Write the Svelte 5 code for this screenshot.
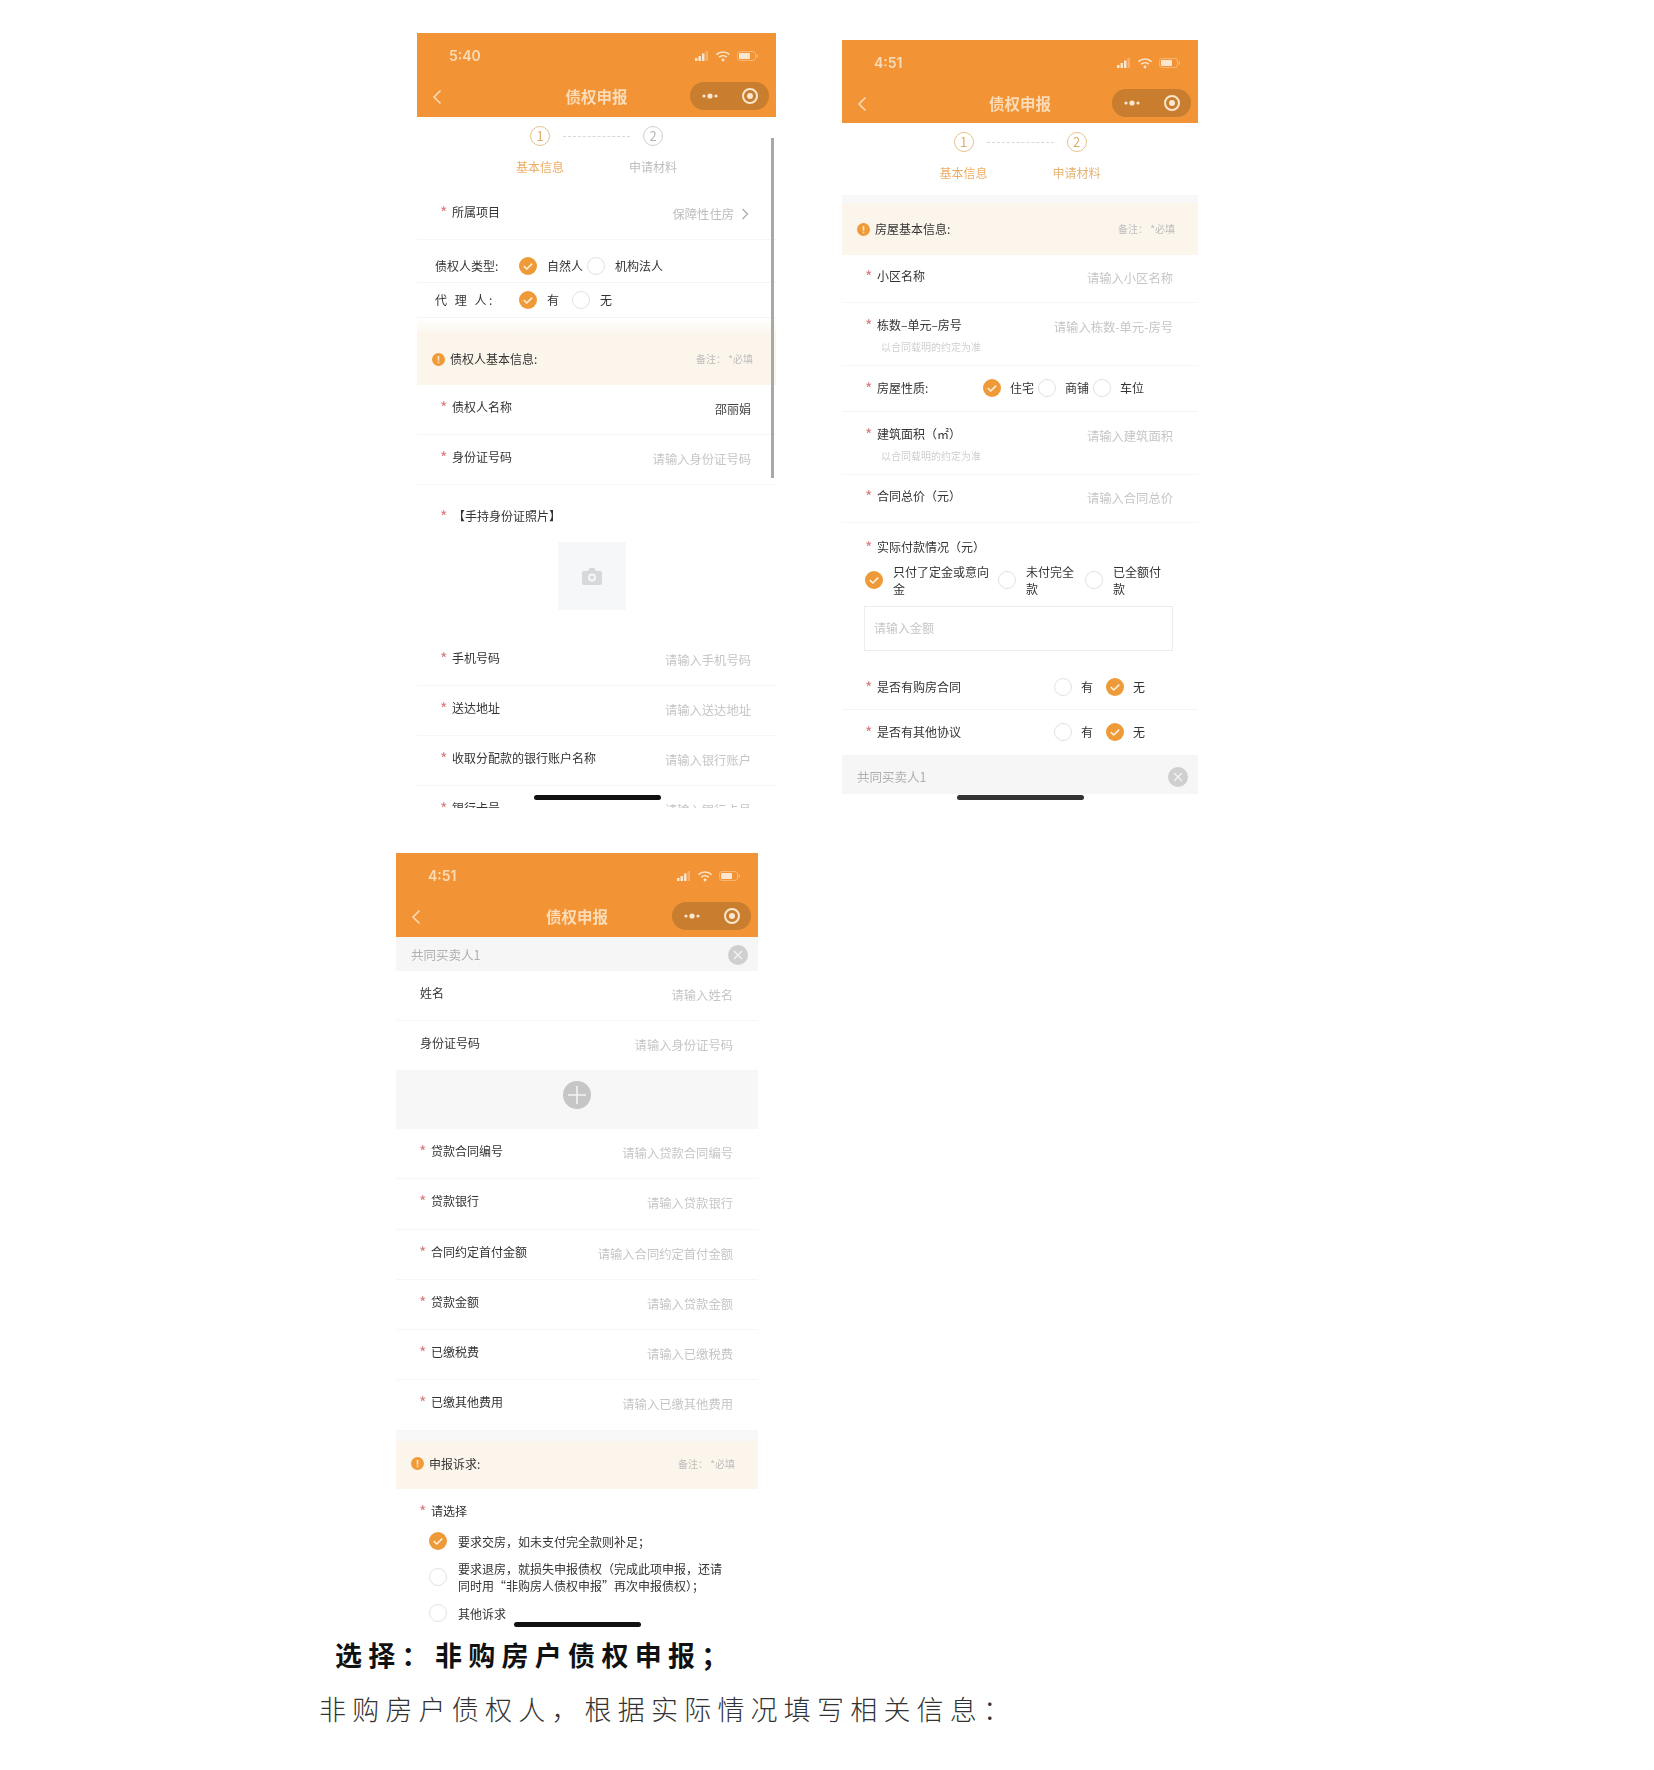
<script>
    const loanRows = [
        ["贷款合同编号", "请输入贷款合同编号"],
        ["贷款银行", "请输入贷款银行"],
        ["合同约定首付金额", "请输入合同约定首付金额"],
        ["贷款金额", "请输入贷款金额"],
        ["已缴税费", "请输入已缴税费"],
        ["已缴其他费用", "请输入已缴其他费用"],
    ];
    const contactRows = [
        ["手机号码", "请输入手机号码"],
        ["送达地址", "请输入送达地址"],
        ["收取分配款的银行账户名称", "请输入银行账户"],
        ["银行卡号", "请输入银行卡号"],
    ];
</script>

{#snippet header(time)}
    <div class="header">
        <div class="status">
            <span class="time">{time}</span>
            <svg width="64" height="12" viewBox="0 0 64 12" fill="#fbe6cf">
                <rect x="0" y="8" width="2.5" height="3" />
                <rect x="3.5" y="6" width="2.5" height="5" />
                <rect x="7" y="3.5" width="2.5" height="7.5" />
                <rect x="10.5" y="1" width="2.5" height="10" opacity="0.35" />
                <path d="M21.5 4.6a9.5 9.5 0 0 1 13 0M24.2 7.2a5.6 5.6 0 0 1 7.6 0" fill="none" stroke="#fbe6cf" stroke-width="1.6" />
                <circle cx="28" cy="10" r="1.4" />
                <rect x="42.5" y="1.5" width="18" height="9" rx="2.5" fill="none" stroke="#fbe6cf" stroke-opacity="0.4" />
                <rect x="44" y="3" width="11" height="6" rx="1" />
                <rect x="61.5" y="4.5" width="1.5" height="3" opacity="0.4" />
            </svg>
        </div>
        <div class="nav">
            <svg class="back" width="10" height="16" viewBox="0 0 10 16">
                <path d="M8.5 1.5 2 8l6.5 6.5" fill="none" stroke="#fbdcb8" stroke-width="1.6" />
            </svg>
            <span class="title">债权申报</span>
            <svg class="capsule" width="79" height="28" viewBox="0 0 79 28">
                <rect width="79" height="28" rx="14" fill="#c97d2e" />
                <circle cx="14" cy="14" r="1.6" fill="#fbe6cf" />
                <circle cx="20" cy="14" r="2.6" fill="#fbe6cf" />
                <circle cx="26" cy="14" r="1.6" fill="#fbe6cf" />
                <circle cx="60" cy="14" r="7" fill="none" stroke="#fbe6cf" stroke-width="2" />
                <circle cx="60" cy="14" r="3" fill="#fbe6cf" />
            </svg>
        </div>
    </div>
{/snippet}

{#snippet steps(activeSecond)}
    <div class="steps">
        <div class="step-marks">
            <span class="mark">1</span>
            <span class="dash"></span>
            <span class="mark" class:muted={!activeSecond}>2</span>
        </div>
        <div class="step-names">
            <span class="on">基本信息</span>
            <span class:on={activeSecond} class:soft={activeSecond}>申请材料</span>
        </div>
    </div>
{/snippet}

{#snippet banner(title)}
    <div class="banner">
        <svg width="13" height="13" viewBox="0 0 13 13">
            <circle cx="6.5" cy="6.5" r="6.5" fill="#f09a38" />
            <rect x="5.7" y="3" width="1.6" height="4.6" fill="#fde7cc" />
            <rect x="5.7" y="8.6" width="1.6" height="1.6" fill="#fde7cc" />
        </svg>
        <span class="banner-title">{title}</span>
        <span class="note">备注： *必填</span>
    </div>
{/snippet}

{#snippet radio(on)}
    {#if on}
        <svg class="radio" width="18" height="18" viewBox="0 0 18 18">
            <circle cx="9" cy="9" r="9" fill="#ee9a38" />
            <path d="M4.8 9.2 7.8 12l5.4-5.4" fill="none" stroke="#fdf0df" stroke-width="1.6" />
        </svg>
    {:else}
        <span class="radio empty"></span>
    {/if}
{/snippet}

{#snippet label(text, star = true)}
    <span class="label">
        {#if star}<i class="star">*</i>{/if}<span>{text}</span>
    </span>
{/snippet}

{#snippet closeBand(cls)}
    <div class="band {cls}">
        <span>共同买卖人1</span>
        <svg width="20" height="20" viewBox="0 0 20 20">
            <circle cx="10" cy="10" r="10" fill="#cfcfcf" />
            <path d="M6 6l8 8M14 6l-8 8" stroke="#f2f2f2" stroke-width="1.5" />
        </svg>
    </div>
{/snippet}

<div class="page">
    <div class="top">
        <section class="phone one">
            {@render header("5:40")}
            {@render steps(false)}

            <div class="row">
                {@render label("所属项目")}
                <span class="hint-value">
                    保障性住房
                    <svg width="8" height="12" viewBox="0 0 8 12">
                        <path d="M1.5 1 6.5 6l-5 5" fill="none" stroke="#aaa" stroke-width="1.2" />
                    </svg>
                </span>
            </div>

            <div class="choice first">
                <span class="choice-name type">债权人类型:</span>
                {@render radio(true)}<span class="opt">自然人</span>
                {@render radio(false)}<span class="opt">机构法人</span>
            </div>
            <div class="choice">
                <span class="choice-name type spaced">代 理 人:</span>
                {@render radio(true)}<span class="opt wide">有</span>
                {@render radio(false)}<span class="opt">无</span>
            </div>

            <div class="spacer fade"></div>
            {@render banner("债权人基本信息:")}

            <div class="row">
                {@render label("债权人名称")}
                <span class="value">邵丽娟</span>
            </div>
            <div class="row">
                {@render label("身份证号码")}
                <span class="holder">请输入身份证号码</span>
            </div>

            <div class="upload">
                <span class="label"><i class="star">*</i><span class="bracket">【手持身份证照片】</span></span>
                <div class="photo">
                    <svg width="20" height="17" viewBox="0 0 20 17">
                        <path d="M2 3h4l1.5-3h5L14 3h4a2 2 0 0 1 2 2v10a2 2 0 0 1-2 2H2a2 2 0 0 1-2-2V5a2 2 0 0 1 2-2z" fill="#d6d8da" />
                        <circle cx="10" cy="9.5" r="4" fill="#f6f7f8" />
                        <circle cx="10" cy="9.5" r="2" fill="#d6d8da" />
                    </svg>
                </div>
            </div>

            {#each contactRows as [name, holder]}
                <div class="row">
                    {@render label(name)}
                    <span class="holder">{holder}</span>
                </div>
            {/each}

            <span class="scroll"></span>
            <span class="home"></span>
        </section>

        <section class="phone two">
            {@render header("4:51")}
            {@render steps(true)}
            <div class="spacer thin"></div>
            {@render banner("房屋基本信息:")}

            <div class="row short">
                {@render label("小区名称")}
                <span class="holder">请输入小区名称</span>
            </div>
            <div class="row hinted">
                <div>
                    {@render label("栋数–单元–房号")}
                    <p class="hint">以合同载明的约定为准</p>
                </div>
                <span class="holder">请输入栋数-单元-房号</span>
            </div>
            <div class="choice house">
                <span class="choice-name">{@render label("房屋性质:")}</span>
                {@render radio(true)}<span class="opt">住宅</span>
                {@render radio(false)}<span class="opt">商铺</span>
                {@render radio(false)}<span class="opt">车位</span>
            </div>
            <div class="row hinted">
                <div>
                    {@render label("建筑面积（㎡）")}
                    <p class="hint">以合同载明的约定为准</p>
                </div>
                <span class="holder">请输入建筑面积</span>
            </div>
            <div class="row short">
                {@render label("合同总价（元）")}
                <span class="holder">请输入合同总价</span>
            </div>

            <div class="payment">
                {@render label("实际付款情况（元）")}
                <div class="pay-options">
                    <div class="pay">{@render radio(true)}<span>只付了定金或意向金</span></div>
                    <div class="pay">{@render radio(false)}<span>未付完全款</span></div>
                    <div class="pay">{@render radio(false)}<span>已全额付款</span></div>
                </div>
                <div class="amount">请输入金额</div>
            </div>

            <div class="choice yesno tall">
                <span class="choice-name">{@render label("是否有购房合同")}</span>
                {@render radio(false)}<span class="opt wide">有</span>
                {@render radio(true)}<span class="opt">无</span>
            </div>
            <div class="choice yesno">
                <span class="choice-name">{@render label("是否有其他协议")}</span>
                {@render radio(false)}<span class="opt wide">有</span>
                {@render radio(true)}<span class="opt">无</span>
            </div>
            {@render closeBand("tall-band")}
            <span class="home"></span>
        </section>
    </div>

    <section class="phone three">
        {@render header("4:51")}
        {@render closeBand("")}

        <div class="row plain">
            {@render label("姓名", false)}
            <span class="holder">请输入姓名</span>
        </div>
        <div class="row plain">
            {@render label("身份证号码", false)}
            <span class="holder">请输入身份证号码</span>
        </div>

        <div class="add">
            <svg width="28" height="28" viewBox="0 0 28 28">
                <circle cx="14" cy="14" r="14" fill="#c6c6c6" />
                <path d="M14 5v18M5 14h18" stroke="#f4f4f4" stroke-width="1.6" />
            </svg>
        </div>

        {#each loanRows as [name, holder]}
            <div class="row loan">
                {@render label(name)}
                <span class="holder">{holder}</span>
            </div>
        {/each}

        <div class="spacer small"></div>
        {@render banner("申报诉求:")}

        <div class="claims">
            {@render label("请选择")}
            <div class="claim first-claim">{@render radio(true)}<span>要求交房，如未支付完全款则补足；</span></div>
            <div class="claim">{@render radio(false)}<span>要求退房，就损失申报债权（完成此项申报，还请同时用“非购房人债权申报”再次申报债权）；</span></div>
            <div class="claim">{@render radio(false)}<span>其他诉求</span></div>
        </div>
        <span class="home"></span>
    </section>

    <p class="heading">选择：非购房户债权申报；</p>
    <p class="lead">非购房户债权人，根据实际情况填写相关信息：</p>
</div>

<style>
    :global(body) {
        background: #fff;
    }

    .page {
        min-height: 1770px;
        font-family: "Noto Sans CJK SC", "Noto Sans", sans-serif;
        background: #fff;
        overflow: hidden;
    }

    .top {
        display: flex;
        align-items: flex-start;
        gap: 66px;
        padding: 33px 0 0 417px;
        height: 775px;
    }

    .phone {
        position: relative;
        overflow: hidden;
        font-size: 12px;
        line-height: 16px;
        color: #333;
        background: #fff;
        filter: blur(0.5px);
    }

    .one {
        width: 359px;
        height: 775px;
    }

    .two {
        width: 356px;
        height: 760px;
        margin-top: 7px;
    }

    .three {
        width: 362px;
        height: 777px;
        margin: 45px 0 0 396px;
    }

    /* header */
    .header {
        height: 84px;
        background: #f29436;
    }

    .two .header {
        height: 83px;
    }

    .status {
        display: flex;
        align-items: center;
        justify-content: space-between;
        height: 44px;
        padding: 2px 17px 0 32px;
        box-sizing: border-box;
    }

    .time {
        font-family: Inter, "Liberation Sans", sans-serif;
        font-size: 14px;
        font-weight: 600;
        color: #fbdcb8;
    }

    .nav {
        display: grid;
        grid-template-columns: 1fr auto 1fr;
        align-items: center;
        height: 40px;
        padding: 0 7px;
    }

    .back {
        margin-left: 8px;
    }

    .title {
        margin-top: -3px;
        font-size: 15.5px;
        font-weight: 700;
        color: #fbdcb8;
    }

    .capsule {
        justify-self: end;
        margin-top: -2px;
    }

    /* steps */
    .steps {
        height: 73px;
        padding-top: 9px;
        box-sizing: border-box;
    }

    .two .steps {
        height: 72px;
    }

    .step-marks {
        display: flex;
        justify-content: center;
        align-items: center;
        gap: 13px;
    }

    .mark {
        width: 18px;
        height: 18px;
        border: 1px solid #e6c38f;
        border-radius: 50%;
        font-size: 13px;
        line-height: 18px;
        text-align: center;
        color: #dcae6d;
    }

    .mark.muted {
        border-color: #cfcfcf;
        color: #b5b5b5;
    }

    .dash {
        width: 67px;
        border-top: 1px dashed #d8d8d8;
    }

    .step-names {
        display: grid;
        grid-template-columns: 113px 113px;
        justify-content: center;
        margin-top: 13px;
        text-align: center;
        color: #bdbdbd;
    }

    .step-names .on {
        color: #ecae66;
    }

    .step-names .soft {
        color: #e6b475;
    }

    /* banners and gaps */
    .spacer {
        background: #f8f8f8;
    }

    .fade {
        height: 15px;
        background: linear-gradient(#fff, #fcf6ee);
    }

    .thin {
        height: 8px;
    }

    .small {
        height: 10.5px;
    }

    .banner {
        display: flex;
        align-items: center;
        height: 52px;
        padding: 0 23px 0 15px;
        box-sizing: border-box;
        background: #fcf5eb;
    }

    .three .banner {
        height: 48px;
        padding-bottom: 3px;
    }

    .banner-title {
        margin-left: 5px;
        flex: 1;
        color: #333;
    }

    .note {
        font-size: 10px;
        color: #bdbdbd;
    }

    /* form rows */
    .row {
        display: flex;
        justify-content: space-between;
        align-items: flex-start;
        height: 50px;
        padding: 14px 25px 0 0;
        box-sizing: border-box;
        border-bottom: 1px solid #f6f6f6;
    }

    .loan {
        height: 50.25px;
    }

    .short {
        height: 48px;
        padding-top: 13px;
    }

    .hinted {
        height: 63px;
    }

    .label {
        display: flex;
        padding-left: 23px;
        white-space: nowrap;
    }

    .star {
        width: 12px;
        font-size: 16px;
        font-style: normal;
        color: #d5807f;
    }

    .bracket {
        margin-left: 1px;
    }

    .plain .label {
        padding-left: 24px;
    }

    .holder,
    .hint-value {
        margin-top: 2px;
        font-size: 12.3px;
        color: #c6c6c6;
    }

    .value {
        margin-top: 2px;
        color: #444;
    }

    .hint-value {
        display: inline-flex;
        align-items: center;
        gap: 7px;
        margin-right: 2px;
        color: #bdbdbd;
    }

    .hint {
        margin: 7px 0 0 39px;
        font-size: 10px;
        line-height: 14px;
        color: #cfcfcf;
    }

    /* radio rows */
    .choice {
        display: flex;
        align-items: center;
        height: 35px;
        box-sizing: border-box;
        border-bottom: 1px solid #f4f4f4;
    }

    .first {
        height: 43px;
        padding-top: 9px;
    }

    .choice-name {
        flex: none;
    }

    .choice-name.type {
        width: 84px;
        margin-left: 18px;
    }

    .spaced {
        letter-spacing: 2.5px;
    }

    .house {
        height: 46px;
        padding-bottom: 2px;
    }

    .house .choice-name {
        width: 141px;
    }

    .yesno {
        height: 46px;
        padding-bottom: 1px;
    }

    .yesno.tall {
        height: 48px;
        padding: 2px 0 0;
    }

    .yesno .choice-name {
        width: 212px;
    }

    .radio {
        flex: none;
        width: 18px;
        height: 18px;
    }

    .empty {
        box-sizing: border-box;
        border: 1.5px solid #e2e2e2;
        border-radius: 50%;
    }

    .opt {
        margin: 0 4px 0 10px;
    }

    .two .opt {
        margin-left: 9px;
    }

    .opt.wide,
    .two .opt.wide {
        margin-right: 13px;
    }

    /* upload */
    .upload {
        height: 151px;
        padding-top: 23px;
        box-sizing: border-box;
    }

    .photo {
        display: flex;
        align-items: center;
        justify-content: center;
        width: 68px;
        height: 68px;
        margin: 18px 0 0 141px;
        background: #f6f7f8;
    }

    /* payment */
    .payment {
        height: 139px;
        padding-top: 16px;
        box-sizing: border-box;
    }

    .pay-options {
        display: grid;
        grid-template-columns: 133px 87px 87px;
        margin: 8px 0 0 23px;
    }

    .pay {
        display: flex;
        align-items: center;
        gap: 10px;
        line-height: 17px;
    }

    .amount {
        height: 45px;
        margin: 9px 25px 0 22px;
        padding-left: 9px;
        box-sizing: border-box;
        border: 1px solid #ececec;
        line-height: 41px;
        color: #c6c6c6;
    }

    /* close band */
    .band {
        display: flex;
        align-items: center;
        justify-content: space-between;
        height: 34px;
        padding: 2px 10px 0 15px;
        box-sizing: border-box;
        background: #f6f6f7;
        font-size: 12.5px;
        color: #b0b0b0;
    }

    .tall-band {
        height: 38px;
        padding-top: 4px;
    }

    .add {
        height: 58px;
        padding-top: 10px;
        box-sizing: border-box;
        text-align: center;
        background: #f7f7f8;
    }

    /* claims */
    .claims {
        padding-top: 14px;
    }

    .claim {
        display: flex;
        align-items: center;
        gap: 11px;
        width: 298px;
        margin: 10px 0 0 33px;
        line-height: 17px;
        font-feature-settings: "palt" 0;
    }

    .first-claim {
        margin-top: 13px;
    }

    /* overlays */
    .scroll {
        position: absolute;
        top: 105px;
        right: 2px;
        width: 3px;
        height: 340px;
        background: #a8a8a8;
    }

    .home {
        position: absolute;
        left: 50%;
        bottom: 7px;
        width: 127px;
        height: 5px;
        margin-left: -63px;
        border-radius: 3px;
        background: #111;
    }

    .one .home {
        bottom: 8px;
    }

    .two .home {
        background: #333;
        bottom: 0;
    }

    .three .home {
        bottom: 3px;
    }

    /* text below the screenshots */
    .heading,
    .lead {
        margin: 0;
        white-space: nowrap;
        line-height: 34px;
        color: #111;
    }

    .heading {
        margin: 8px 0 0 335px;
        font-size: 27px;
        font-weight: 700;
        letter-spacing: 6.3px;
    }

    .lead {
        margin: 20px 0 0 319px;
        font-size: 27px;
        font-weight: 300;
        letter-spacing: 6.2px;
        color: #333;
    }
</style>
